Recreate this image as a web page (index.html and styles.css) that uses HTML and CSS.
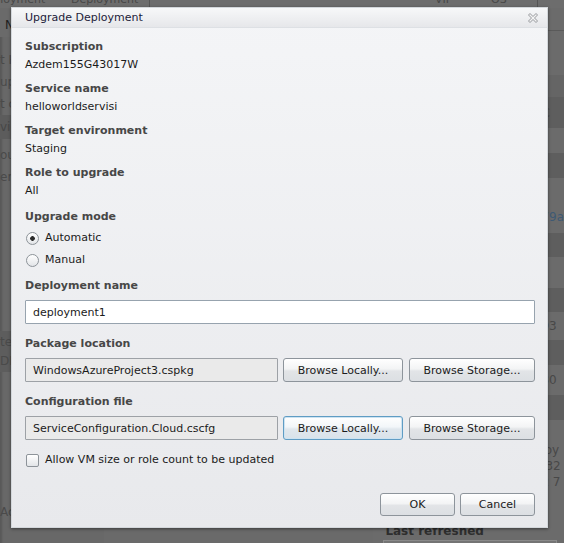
FILE: index.html
```html
<!DOCTYPE html>
<html lang="en">
<head>
<meta charset="utf-8">
<title>Upgrade Deployment</title>
<link rel="stylesheet" href="styles.css">
</head>
<body>
<div class="page">
  <div class="bg-head">
    <span class="hc hc-1">Deployment</span>
    <span class="hc hc-2">Deployment</span>
    <span class="hc hc-3">VIP</span>
    <span class="hc hc-4">OS</span>
  </div>
  <div class="bg-main">
    <div class="bg-left">
      <div class="lrow lrow-head">Ne</div>
      <div class="lrow lrow-first">t H</div>
      <div class="lrow">up</div>
      <div class="lrow">t c</div>
      <div class="lrow lrow-sel">vic</div>
      <div class="lrow lrow-gap">ou</div>
      <div class="lrow">er</div>
      <div class="lblock"><div>tes</div><div>DN</div></div>
      <div class="lrow lrow-last">Ac</div>
    </div>
    <div class="bg-mid">
      <div class="mid-top"></div>
      <div class="mid-bottom"></div>
    </div>
    <div class="bg-right">
      <div class="rrow light h22"></div>
      <div class="rrow light h45 line"></div>
      <div class="rrow mid h22"></div>
      <div class="rrow dark h31"><span class="rt">C</span></div>
      <div class="rrow light h25"></div>
      <div class="rrow dark h25"></div>
      <div class="rrow light h55 bottom"><span class="rt link">79a</span></div>
      <div class="rrow dark h24"></div>
      <div class="rrow light h31"></div>
      <div class="rrow dark h24"></div>
      <div class="rrow light h28"><span class="rt">93</span></div>
      <div class="rrow dark h25"></div>
      <div class="rrow light h30"><span class="rt">30</span></div>
      <div class="rrow dark h25"></div>
      <div class="rrow light h85 stack">
        <span class="rt">loy</span>
        <span class="rt">:32</span>
        <span class="rt">2 7</span>
      </div>
      <div class="rrow light refresh">
        <div class="refresh-label">Last refreshed</div>
        <div class="refresh-box"></div>
      </div>
    </div>
  </div>
</div>

<div class="dialog">
  <div class="titlebar">
    <span class="title">Upgrade Deployment</span>
    <svg class="close" width="10" height="10" viewBox="0 0 10 10" aria-hidden="true">
      <polygon points="0.5,2 2,0.5 5,3.5 8,0.5 9.5,2 6.5,5 9.5,8 8,9.5 5,6.5 2,9.5 0.5,8 3.5,5" fill="#f4f4f4" stroke="#8a8d91" stroke-width="0.9" stroke-linejoin="miter"/>
    </svg>
  </div>
  <div class="dlg-body">
    <div class="field">
      <div class="label">Subscription</div>
      <div class="value">Azdem155G43017W</div>
    </div>
    <div class="field">
      <div class="label">Service name</div>
      <div class="value">helloworldservisi</div>
    </div>
    <div class="field">
      <div class="label">Target environment</div>
      <div class="value">Staging</div>
    </div>
    <div class="field">
      <div class="label">Role to upgrade</div>
      <div class="value">All</div>
    </div>
    <div class="field field-mode">
      <div class="label label-mode">Upgrade mode</div>
      <label class="option"><input class="radio" type="radio" name="mode" checked><span>Automatic</span></label>
      <label class="option"><input class="radio" type="radio" name="mode"><span>Manual</span></label>
    </div>
    <div class="field field-input">
      <div class="label label-input">Deployment name</div>
      <input class="text" type="text" value="deployment1">
    </div>
    <div class="field field-input">
      <div class="label label-input">Package location</div>
      <div class="file-row">
        <input class="text readonly" type="text" value="WindowsAzureProject3.cspkg" readonly>
        <button class="btn btn-local" type="button">Browse Locally...</button>
        <button class="btn btn-storage" type="button">Browse Storage...</button>
      </div>
    </div>
    <div class="field field-input">
      <div class="label label-input">Configuration file</div>
      <div class="file-row">
        <input class="text readonly" type="text" value="ServiceConfiguration.Cloud.cscfg" readonly>
        <button class="btn btn-local focused" type="button">Browse Locally...</button>
        <button class="btn btn-storage" type="button">Browse Storage...</button>
      </div>
    </div>
    <label class="check-row"><input class="check" type="checkbox"><span>Allow VM size or role count to be updated</span></label>
    <div class="footer">
      <button class="btn btn-foot" type="button">OK</button>
      <button class="btn btn-foot" type="button">Cancel</button>
    </div>
  </div>
</div>
</body>
</html>
```

FILE: styles.css
```css
html, body {
  margin: 0;
  padding: 0;
}

body {
  width: 564px;
  height: 543px;
  overflow: hidden;
  position: relative;
  background: #6b6b6b;
  font-family: "DejaVu Sans", Verdana, sans-serif;
  font-size: 11px;
}

/* ---------- dimmed background page ---------- */
.page {
  width: 564px;
  height: 543px;
  display: flex;
  flex-direction: column;
  color: #4c4c4c;
}

.bg-head {
  height: 8px;
  overflow: hidden;
  display: flex;
  background: #6d6d6d;
  flex-shrink: 0;
}

.hc {
  display: block;
  margin-top: -7px;
  line-height: 14px;
  white-space: nowrap;
  overflow: hidden;
  color: #474747;
}

.hc-1 { margin-left: -22px; width: 93px; }
.hc-2 { width: 78px; border-right: 1px solid #555; }
.hc-3 { margin-left: 285px; width: 56px; }
.hc-4 { width: 46px; border-right: 1px solid #555; }

.bg-main {
  flex: 1;
  display: flex;
}

.bg-left {
  width: 106px;
  background: #686868;
  display: flex;
  flex-direction: column;
  box-shadow: inset 3px 0 2px -1px rgba(0, 0, 0, 0.15);
}

.lrow {
  line-height: 22px;
  white-space: nowrap;
  color: #4a4a4a;
  font-size: 12px;
}

.lrow-head {
  height: 29px;
  line-height: 24px;
  padding-top: 5px;
  box-sizing: border-box;
  padding-left: 5px;
  color: #1f1f1f;
  background: #6a6a6a;
}

.lrow-first { margin-top: 12px; }

.lrow-sel {
  line-height: 24px;
  background: #5c5c5c;
  color: #474747;
}

.lrow-gap { margin-top: 5px; }

.lblock {
  margin-top: 143px;
  height: 41px;
  box-sizing: border-box;
  padding-top: 2px;
  background: #5d5d5d;
  line-height: 19px;
  font-size: 12px;
  color: #4a4a4a;
}

.lrow-last {
  margin-top: 133px;
  line-height: 14px;
}

.bg-mid {
  width: 275px;
  display: flex;
  flex-direction: column;
}

.mid-top {
  flex: 1;
  background: #6a6a6a;
}

.mid-bottom {
  height: 15px;
  background: #767676;
}

.bg-right {
  flex: 1;
  display: flex;
  flex-direction: column;
}

.rrow {
  box-sizing: border-box;
  padding-left: 168px;
  display: flex;
  align-items: center;
  font-size: 12px;
  white-space: nowrap;
}

.light { background: #6b6b6b; }
.mid { background: #656565; }
.dark { background: #5e5e5e; }

.line { border-top: 1px solid #5a5a5a; }
.bottom { align-items: flex-end; padding-bottom: 8px; }

.h22 { height: 22px; }
.h24 { height: 24px; }
.h25 { height: 25px; }
.h28 { height: 28px; }
.h30 { height: 30px; }
.h31 { height: 31px; }
.h45 { height: 45px; }
.h55 { height: 55px; }
.h85 { height: 85px; }

.rt { color: #484848; line-height: 16px; }
.rt.link { color: #3e5a74; }

.stack {
  flex-direction: column;
  align-items: flex-start;
  justify-content: flex-start;
  padding-top: 22px;
}

.refresh {
  flex: 1;
  padding-left: 10px;
  flex-direction: column;
  align-items: flex-start;
  justify-content: flex-start;
  padding-top: 19px;
}

.refresh-label {
  margin-left: 2px;
  font-weight: bold;
  font-size: 12px;
  color: #2e2e2e;
  line-height: 14px;
}

.refresh-box {
  margin-top: 2px;
  width: 172px;
  height: 20px;
  border: 1px solid #8a8a8a;
  background: #747474;
}

/* ---------- dialog ---------- */
.dialog {
  position: absolute;
  left: 11px;
  top: 7px;
  width: 535px;
  height: 519px;
  border: 1px solid #d3d7db;
  background: linear-gradient(#f4f5f7, #e8e9ec);
  box-shadow: 0 1px 3px rgba(0, 0, 0, 0.45);
  display: flex;
  flex-direction: column;
}

.titlebar {
  height: 19px;
  border-bottom: 1px solid #dde0e4;
  background: linear-gradient(#f7f8f9, #e6e7ea);
  display: flex;
  align-items: center;
  justify-content: space-between;
  padding: 0 9px 0 13px;
}

.title {
  color: #1d1c3a;
  line-height: 19px;
}

.close {
  display: block;
  margin-top: 1px;
}

.dlg-body {
  flex: 1;
  display: flex;
  flex-direction: column;
  padding: 12px 12px 11px 13px;
}

.field {
  margin-bottom: 10px;
}

.label {
  font-weight: bold;
  color: #474747;
  line-height: 14px;
  margin-bottom: 4px;
}

.value {
  color: #1b1b1b;
  line-height: 14px;
}

.field-mode {
  margin-bottom: 8px;
}

.label-mode {
  margin-top: 2px;
  margin-bottom: 3px;
}

.option {
  height: 22px;
  display: flex;
  align-items: center;
  color: #1b1b1b;
  line-height: 14px;
}

.radio {
  appearance: none;
  -webkit-appearance: none;
  width: 13px;
  height: 13px;
  margin: 0 6px 0 1px;
  border: 1px solid #8d9399;
  border-radius: 50%;
  background: linear-gradient(#ffffff, #e3e5e8);
  box-sizing: border-box;
}

.radio:checked {
  background: radial-gradient(circle, #2c2c2c 0, #2c2c2c 2px, transparent 2.6px), linear-gradient(#ffffff, #e3e5e8);
}

.field-input {
  margin-bottom: 13px;
}

.label-input {
  margin-bottom: 7px;
}

.text {
  display: block;
  box-sizing: border-box;
  width: 100%;
  height: 24px;
  margin: 0;
  padding: 0 7px;
  border: 1px solid #97a3ae;
  border-radius: 1px;
  background: #ffffff;
  font-family: "DejaVu Sans", Verdana, sans-serif;
  font-size: 11px;
  color: #1b1b1b;
  outline: none;
}

.text.readonly {
  background: #eaeaea;
  border-color: #9da1a6;
}

.file-row {
  display: flex;
}

.file-row .text {
  flex: 1;
  width: auto;
  min-width: 0;
}

.btn {
  box-sizing: border-box;
  height: 24px;
  margin: 0;
  padding: 0;
  border: 1px solid #8d949b;
  border-radius: 3px;
  background: linear-gradient(#ffffff, #f3f4f5 45%, #e2e4e7 55%, #dcdfe3);
  font-family: "DejaVu Sans", Verdana, sans-serif;
  font-size: 11px;
  color: #1b1b1b;
}

.btn-local {
  width: 120px;
  margin-left: 5px;
}

.btn-storage {
  width: 126px;
  margin-left: 6px;
}

.btn.focused {
  border-color: #5f9cc4;
  box-shadow: inset 0 0 0 1px #cde3f1;
  background: linear-gradient(#ffffff, #f2f6f9 45%, #e0e7ed 55%, #d9e2ea);
}

.check-row {
  margin-top: 0;
  display: flex;
  align-items: center;
  height: 14px;
  line-height: 14px;
  color: #1b1b1b;
}

.check {
  appearance: none;
  -webkit-appearance: none;
  width: 13px;
  height: 13px;
  margin: 0 6px 0 1px;
  border: 1px solid #8d9399;
  border-radius: 2px;
  background: linear-gradient(#ffffff, #e3e5e8);
  box-sizing: border-box;
}

.footer {
  margin-top: auto;
  display: flex;
  justify-content: flex-end;
}

.btn-foot {
  width: 75px;
  height: 23px;
  margin-left: 5px;
}
```
